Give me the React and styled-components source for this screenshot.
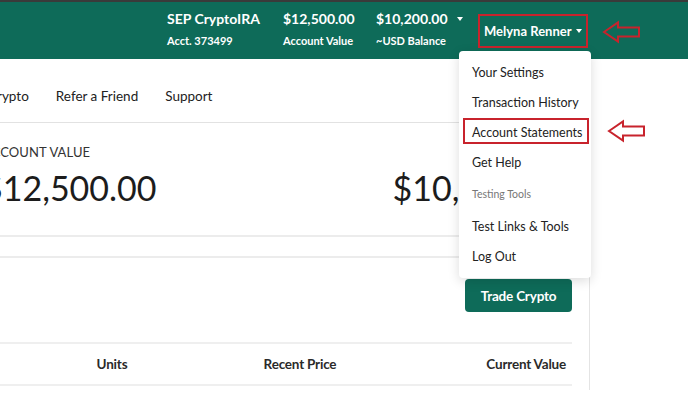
import React from 'react';
import styled, { createGlobalStyle } from 'styled-components';

const GlobalStyle = createGlobalStyle`
  html, body {
    margin: 0;
    padding: 0;
    background: #fff;
    overflow: hidden;
  }
  body {
    font-family: 'Lato', 'Liberation Sans', sans-serif;
    color: #222;
  }
`;

const GREEN = '#0e6b59';
const RED = '#c8232c';

const Page = styled.div`
  position: relative;
  width: 688px;
  height: 412px;
  overflow: hidden;
  background: #fff;
`;

const TopStrip = styled.div`
  height: 2px;
  background: #3a3a3a;
`;

const Header = styled.header`
  height: 57px;
  background: ${GREEN};
  display: flex;
  align-items: flex-start;
  padding-left: 167px;
  box-sizing: border-box;
  color: #fff;
`;

const HeaderCol = styled.div`
  width: ${(p) => p.$w}px;
  display: flex;
  flex-direction: column;
  padding-top: 8px;
`;

const HeaderTitle = styled.div`
  font-size: 14px;
  font-weight: 700;
  line-height: 18px;
  display: flex;
  align-items: center;
  white-space: nowrap;
`;

const HeaderSub = styled.div`
  margin-top: 6px;
  font-size: 11px;
  font-weight: 700;
  line-height: 14px;
  white-space: nowrap;
`;

const Caret = styled.span`
  display: inline-block;
  width: 0;
  height: 0;
  border-left: 3.5px solid transparent;
  border-right: 3.5px solid transparent;
  border-top: 4px solid #fff;
  margin-left: ${(p) => p.$gap || 6}px;
`;

const UserBox = styled.div`
  margin-top: 12px;
  width: 110px;
  height: 34px;
  box-sizing: border-box;
  border: 2px solid ${RED};
  display: flex;
  align-items: center;
  padding-left: 4px;
  font-size: 13px;
  font-weight: 700;
  white-space: nowrap;
`;

const Main = styled.main`
  width: 590px;
  height: 331px;
  box-sizing: border-box;
  border-right: 1px solid #e4e4e4;
  padding-right: 17px;
  display: flex;
  flex-direction: column;
`;

const Nav = styled.nav`
  height: 64px;
  box-sizing: border-box;
  padding-top: 28px;
  margin-right: -17px;
  border-bottom: 1px solid #e2e2e2;
  display: flex;
  gap: 27px;
  margin-left: -12px;
`;

const NavItem = styled.span`
  font-size: 13.5px;
  line-height: 18px;
  color: #222;
  white-space: nowrap;
`;

const ValueRow = styled.section`
  display: flex;
  justify-content: space-between;
  margin-left: -17px;
  padding: 21px 6px 0 0;
  height: 114px;
  box-sizing: border-box;
  border-bottom: 2px solid #ececec;
`;

const ValueCol = styled.div`
  display: flex;
  flex-direction: column;
  align-items: ${(p) => (p.$right ? 'flex-end' : 'flex-start')};
`;

const ValueLabel = styled.div`
  font-size: 13px;
  line-height: 16px;
  color: #333;
  letter-spacing: 0.1px;
  text-transform: uppercase;
`;

const BigValue = styled.div`
  margin-top: ${(p) => (p.$alone ? 24 : 8)}px;
  font-size: 34px;
  line-height: 40px;
  color: #1c1c1c;
  font-weight: 400;
`;

const Divider = styled.div`
  height: 2px;
  background: #ececec;
  margin-top: 19px;
  margin-left: -17px;
`;

const Actions = styled.div`
  display: flex;
  justify-content: flex-end;
  padding-top: 21px;
  height: 84px;
  box-sizing: border-box;
`;

const TradeButton = styled.button`
  width: 107px;
  height: 33px;
  border: none;
  border-radius: 4px;
  background: ${GREEN};
  color: #fff;
  font-family: inherit;
  font-size: 13.5px;
  font-weight: 700;
  letter-spacing: -0.2px;
`;

const TableHead = styled.div`
  display: grid;
  grid-template-columns: 60px 104px 66px 140px 1fr;
  align-items: center;
  height: 44px;
  box-sizing: border-box;
  border-top: 2px solid #efefef;
  border-bottom: 2px solid #efefef;
`;

const HeadCell = styled.div`
  font-size: 13.5px;
  font-weight: 700;
  color: #2a2a2a;
  letter-spacing: -0.2px;
  text-align: ${(p) => p.$align || 'center'};
  padding-right: ${(p) => (p.$align === 'right' ? 6 : 0)}px;
  white-space: nowrap;
`;

const Dropdown = styled.div`
  position: absolute;
  left: 459px;
  top: 51px;
  width: 132px;
  height: 227px;
  box-sizing: border-box;
  padding: 6px 0 7px;
  background: #fff;
  border-radius: 4px;
  box-shadow: 0 3px 12px rgba(0, 0, 0, 0.14);
  display: flex;
  flex-direction: column;
`;

const MenuItem = styled.div`
  position: relative;
  height: ${(p) => p.$h || 30}px;
  display: flex;
  align-items: center;
  padding-left: 13px;
  font-size: ${(p) => (p.$muted ? 10.5 : 12.5)}px;
  color: ${(p) => (p.$muted ? '#777' : '#222')};
  white-space: nowrap;
  ${(p) =>
    p.$marked &&
    `
    &::after {
      content: '';
      position: absolute;
      left: 4px;
      right: 2px;
      top: 1px;
      bottom: 3px;
      border: 2px solid ${RED};
    }
  `}
`;

const ArrowMark = styled.svg`
  position: absolute;
  left: ${(p) => p.$x}px;
  top: ${(p) => p.$y}px;
  overflow: visible;
`;

function Arrow({ x, y }) {
  return (
    <ArrowMark $x={x} $y={y} width="39" height="22" viewBox="0 0 39 22">
      <path
        d="M2 11 L16 1.5 L16 6.5 L37 6.5 L37 15.5 L16 15.5 L16 20.5 Z"
        fill="none"
        stroke={RED}
        strokeWidth="2"
        strokeLinejoin="miter"
      />
    </ArrowMark>
  );
}

const menu = [
  { label: 'Your Settings' },
  { label: 'Transaction History' },
  { label: 'Account Statements', marked: true },
  { label: 'Get Help' },
  { label: 'Testing Tools', muted: true, h: 34 },
  { label: 'Test Links & Tools' },
  { label: 'Log Out' },
];

export default function App() {
  return (
    <Page>
      <GlobalStyle />
      <TopStrip />
      <Header>
        <HeaderCol $w={116}>
          <HeaderTitle>SEP CryptoIRA</HeaderTitle>
          <HeaderSub>Acct. 373499</HeaderSub>
        </HeaderCol>
        <HeaderCol $w={93}>
          <HeaderTitle>$12,500.00</HeaderTitle>
          <HeaderSub>Account Value</HeaderSub>
        </HeaderCol>
        <HeaderCol $w={102}>
          <HeaderTitle>
            $10,200.00
            <Caret $gap={9} />
          </HeaderTitle>
          <HeaderSub>~USD Balance</HeaderSub>
        </HeaderCol>
        <UserBox>
          Melyna Renner
          <Caret $gap={4} />
        </UserBox>
      </Header>

      <Main>
        <Nav>
          <NavItem>Crypto</NavItem>
          <NavItem>Refer a Friend</NavItem>
          <NavItem>Support</NavItem>
        </Nav>
        <ValueRow>
          <ValueCol>
            <ValueLabel>Account Value</ValueLabel>
            <BigValue>$12,500.00</BigValue>
          </ValueCol>
          <ValueCol $right>
            <BigValue $alone>$10,200.00</BigValue>
          </ValueCol>
        </ValueRow>
        <Divider />
        <Actions>
          <TradeButton>Trade Crypto</TradeButton>
        </Actions>
        <TableHead>
          <div />
          <HeadCell>Units</HeadCell>
          <div />
          <HeadCell>Recent Price</HeadCell>
          <HeadCell $align="right">Current Value</HeadCell>
        </TableHead>
      </Main>

      <Dropdown>
        {menu.map((m) => (
          <MenuItem key={m.label} $muted={m.muted} $marked={m.marked} $h={m.h}>
            {m.label}
          </MenuItem>
        ))}
      </Dropdown>

      <Arrow x={602} y={21} />
      <Arrow x={607} y={120} />
    </Page>
  );
}
